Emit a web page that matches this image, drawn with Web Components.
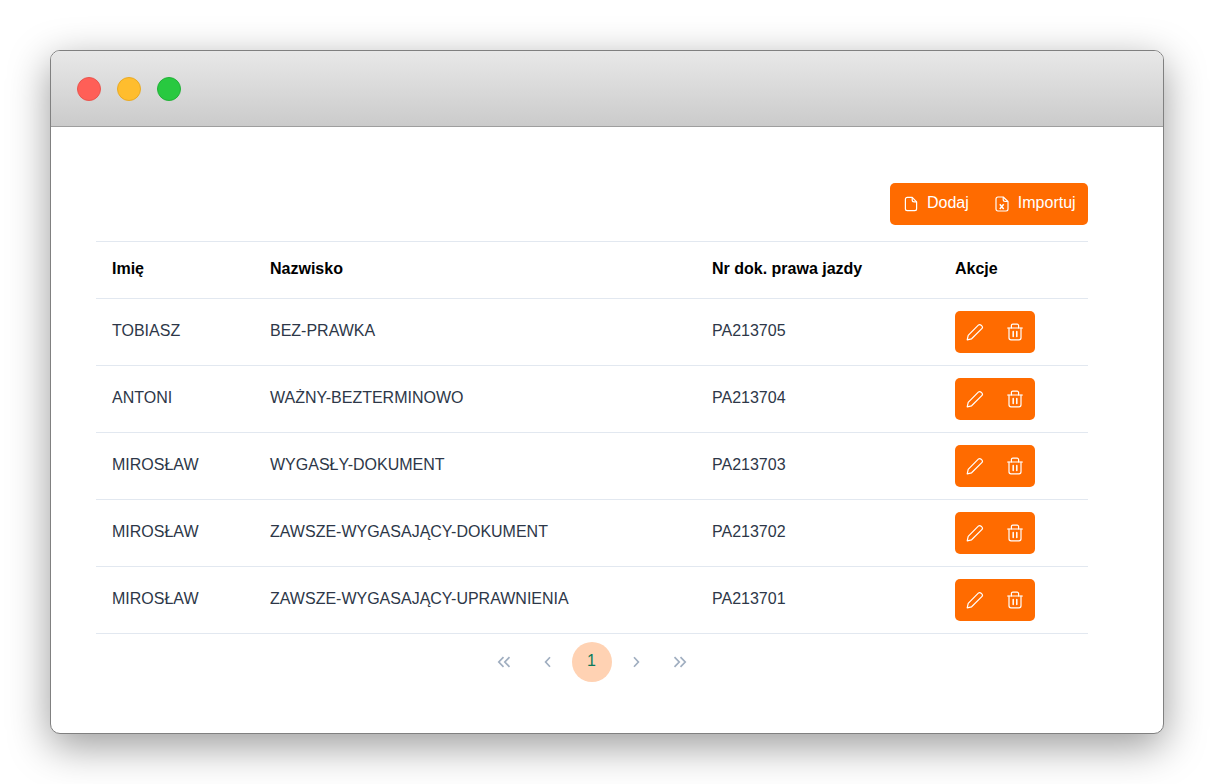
<!DOCTYPE html>
<html lang="pl">
<head>
<meta charset="utf-8">
<title>Kierowcy</title>
<style>
  html, body { margin: 0; background: #fff; }
  body { padding: 50px; height: 784px; box-sizing: border-box; font-family: "Liberation Sans", Arial, sans-serif; }
</style>
</head>
<body>
<app-window>
  <drivers-toolbar></drivers-toolbar>
  <drivers-table></drivers-table>
  <drivers-pager></drivers-pager>
</app-window>

<script>
const ICONS = {
  file: `<svg width="16" height="16" viewBox="0 0 16 16" fill="none" stroke="#fff" stroke-width="1.2" stroke-linejoin="round"><path d="M2.4 3.2a1.9 1.9 0 0 1 1.9-1.9h4.9l4.4 4.5v7a1.9 1.9 0 0 1-1.9 1.9H4.3a1.9 1.9 0 0 1-1.9-1.9z"/><path d="M9.2 1.3v2.6a1.9 1.9 0 0 0 1.9 1.9h2.5"/></svg>`,
  excel: `<svg width="16" height="16" viewBox="0 0 16 16" fill="none" stroke="#fff" stroke-width="1.2" stroke-linejoin="round"><path d="M2 2.9a1.9 1.9 0 0 1 1.9-1.9h5.3l4.8 4.5v7.6a1.9 1.9 0 0 1-1.9 1.9H3.9A1.9 1.9 0 0 1 2 13.1z"/><path d="M9.2 1v2.6a1.9 1.9 0 0 0 1.9 1.9H14"/><path d="M5.8 8.2l3.9 4.8M9.7 8.2L5.8 13" stroke-width="1.5"/></svg>`,
  pencil: `<svg width="18" height="18" viewBox="0 0 18 18" fill="none" stroke="#fff" stroke-width="1.2" stroke-linejoin="round" stroke-linecap="round"><path d="M1.2 16.8l1-4.4L12.3 2.2a2 2 0 0 1 2.8 0l.7.7a2 2 0 0 1 0 2.8L5.6 15.8z"/></svg>`,
  trash: `<svg width="18" height="18" viewBox="0 0 18 18" fill="none" stroke="#fff" stroke-width="1.2" stroke-linejoin="round" stroke-linecap="round"><path d="M1.6 5h14.8"/><path d="M5.4 5V2.6a1.4 1.4 0 0 1 1.4-1.4h4.4a1.4 1.4 0 0 1 1.4 1.4V5"/><path d="M3 5v9.8a2 2 0 0 0 2 2h8a2 2 0 0 0 2-2V5"/><path d="M7.2 8.4v5M10.8 8.4v5" stroke-width="1.5"/></svg>`,
  first: `<svg width="16" height="16" viewBox="0 0 16 16" fill="none" stroke="#a0aec0" stroke-width="1.7"><path d="M7.5 3.2L2.8 8l4.7 4.8M13.5 3.2L8.8 8l4.7 4.8"/></svg>`,
  prev: `<svg width="16" height="16" viewBox="0 0 16 16" fill="none" stroke="#a0aec0" stroke-width="1.7"><path d="M10 3.2L5.6 8l4.4 4.8"/></svg>`,
  next: `<svg width="16" height="16" viewBox="0 0 16 16" fill="none" stroke="#a0aec0" stroke-width="1.7"><path d="M6 3.2L10.4 8 6 12.8"/></svg>`,
  last: `<svg width="16" height="16" viewBox="0 0 16 16" fill="none" stroke="#a0aec0" stroke-width="1.7"><path d="M2.5 3.2L7.2 8l-4.7 4.8M8.5 3.2L13.2 8l-4.7 4.8"/></svg>`
};

const DRIVERS = [
  ['TOBIASZ', 'BEZ-PRAWKA', 'PA213705'],
  ['ANTONI', 'WAŻNY-BEZTERMINOWO', 'PA213704'],
  ['MIROSŁAW', 'WYGASŁY-DOKUMENT', 'PA213703'],
  ['MIROSŁAW', 'ZAWSZE-WYGASAJĄCY-DOKUMENT', 'PA213702'],
  ['MIROSŁAW', 'ZAWSZE-WYGASAJĄCY-UPRAWNIENIA', 'PA213701']
];

class AppWindow extends HTMLElement {
  constructor() {
    super();
    this.attachShadow({ mode: 'open' });
    this.shadowRoot.innerHTML = `
      <style>
        :host {
          display: flex;
          flex-direction: column;
          width: 1114px;
          height: 684px;
          box-sizing: border-box;
          border: 1px solid #808080;
          border-radius: 10px;
          background: #fff;
          box-shadow: 0 12px 42px rgba(0, 0, 0, 0.4);
          overflow: hidden;
        }
        .bar {
          flex: none;
          height: 75px;
          display: flex;
          align-items: center;
          gap: 16px;
          padding-left: 26px;
          background: linear-gradient(#e8e8e8, #cbcbcb);
          border-bottom: 1px solid #9e9e9e;
        }
        .dot { width: 24px; height: 24px; box-sizing: border-box; border-radius: 50%; border: 1px solid; }
        .red { background: #ff5f57; border-color: #e9554e; }
        .yellow { background: #ffbd2e; border-color: #e9aa24; }
        .green { background: #28c940; border-color: #22b138; }
        .content { flex: 1; padding: 56px 75px 0 45px; }
      </style>
      <div class="bar">
        <div class="dot red"></div>
        <div class="dot yellow"></div>
        <div class="dot green"></div>
      </div>
      <div class="content"><slot></slot></div>
    `;
  }
}

class DriversToolbar extends HTMLElement {
  constructor() {
    super();
    this.attachShadow({ mode: 'open' });
    this.shadowRoot.innerHTML = `
      <style>
        :host { display: flex; justify-content: flex-end; margin-bottom: 16px; }
        .group {
          display: flex;
          align-items: center;
          height: 42px;
          width: 198px;
          box-sizing: border-box;
          padding-left: 13px;
          background: #ff6b00;
          border-radius: 5px;
          color: #fff;
          font-size: 16px;
        }
        .btn { display: flex; align-items: center; gap: 8px; }
        .btn + .btn { margin-left: 25px; }
        .btn span { padding-bottom: 2px; }
      </style>
      <div class="group">
        <div class="btn">${ICONS.file}<span>Dodaj</span></div>
        <div class="btn">${ICONS.excel}<span>Importuj</span></div>
      </div>
    `;
  }
}

class DriversTable extends HTMLElement {
  constructor() {
    super();
    this.attachShadow({ mode: 'open' });
    const rows = DRIVERS.map(d => `
      <div class="row">
        <div>${d[0]}</div>
        <div>${d[1]}</div>
        <div>${d[2]}</div>
        <div class="actions">${ICONS.pencil}${ICONS.trash}</div>
      </div>
    `).join('');
    this.shadowRoot.innerHTML = `
      <style>
        :host { display: block; font-size: 16px; color: #2d3748; }
        .row {
          display: grid;
          grid-template-columns: 158px 442px 243px 149px;
          align-items: center;
          height: 67px;
          box-sizing: border-box;
          border-bottom: 1px solid #e2e8f0;
        }
        .row > div { padding: 0 0 2px 16px; }
        .head {
          height: 58px;
          border-top: 1px solid #e2e8f0;
          font-weight: 700;
          color: #000;
        }
        .row > .actions {
          display: flex;
          align-items: center;
          justify-content: space-between;
          width: 80px;
          height: 42px;
          box-sizing: border-box;
          margin-left: 16px;
          padding: 0 11px;
          background: #ff6b00;
          border-radius: 5px;
        }
      </style>
      <div class="row head">
        <div>Imię</div>
        <div>Nazwisko</div>
        <div>Nr dok. prawa jazdy</div>
        <div>Akcje</div>
      </div>
      ${rows}
    `;
  }
}

class DriversPager extends HTMLElement {
  constructor() {
    super();
    this.attachShadow({ mode: 'open' });
    this.shadowRoot.innerHTML = `
      <style>
        :host { display: flex; justify-content: center; margin-top: 8px; }
        .item { width: 40px; height: 40px; margin: 0 2px; display: flex; align-items: center; justify-content: center; }
        .current {
          box-sizing: border-box;
          padding: 0 1px 2px 0;
          border-radius: 50%;
          background: #ffd2b3;
          color: #0b7a5c;
          font-size: 16px;
        }
      </style>
      <div class="item">${ICONS.first}</div>
      <div class="item">${ICONS.prev}</div>
      <div class="item current">1</div>
      <div class="item">${ICONS.next}</div>
      <div class="item">${ICONS.last}</div>
    `;
  }
}

customElements.define('app-window', AppWindow);
customElements.define('drivers-toolbar', DriversToolbar);
customElements.define('drivers-table', DriversTable);
customElements.define('drivers-pager', DriversPager);
</script>
</body>
</html>
